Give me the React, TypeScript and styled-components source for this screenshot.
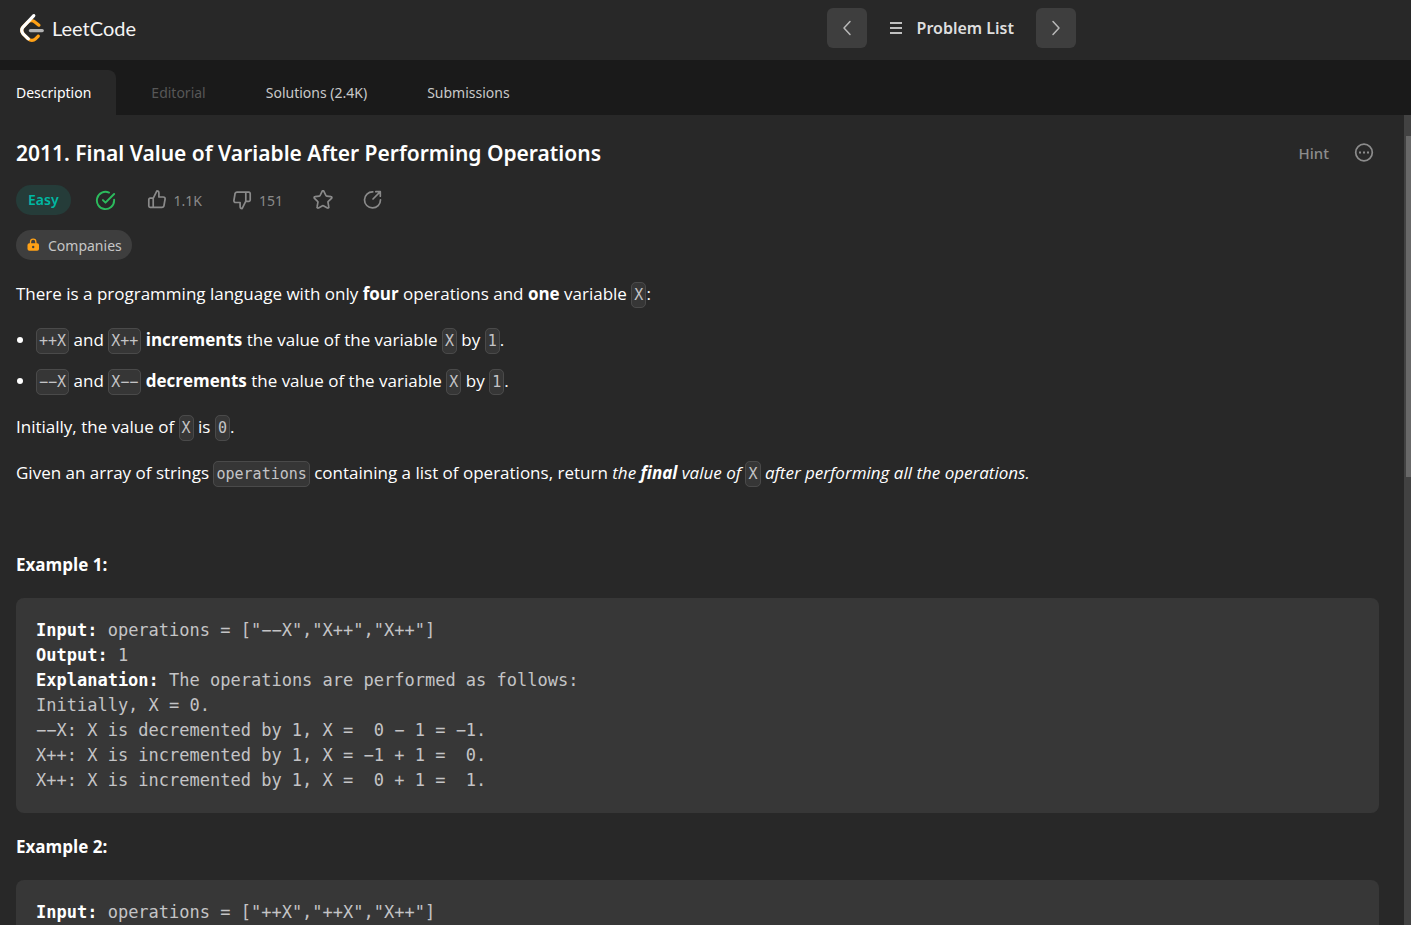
import React from "react";
import styled, { createGlobalStyle, css } from "styled-components";

const sans = `"Noto Sans", "Open Sans", sans-serif`;
const prose = `"Open Sans", "Noto Sans", sans-serif`;
const mono = `"DejaVu Sans Mono", "Liberation Mono", monospace`;

const GlobalStyle = createGlobalStyle`
  * { box-sizing: border-box; }
  body {
    margin: 0;
    background: #282828;
    color: #fff;
    font-family: ${sans};
    font-size: 16px;
    line-height: 25px;
  }
  button { font: inherit; color: inherit; border: 0; background: none; padding: 0; cursor: pointer; }
  svg { display: block; flex: none; }
`;

const Page = styled.div`
  display: flex;
  flex-direction: column;
  height: 100vh;
  overflow: hidden;
`;

const Header = styled.header`
  display: flex;
  flex: none;
  align-items: flex-start;
  justify-content: space-between;
  height: 60px;
  padding: 8px 335px 0 20px;
`;

const Logo = styled.a`
  display: flex;
  align-items: center;
  gap: 8px;
  height: 40px;
  color: #f4f4f4;
  font-family: Lato, sans-serif;
  font-size: 20px;
  text-decoration: none;
`;

const ProblemNav = styled.nav`
  display: flex;
  align-items: center;
  gap: 22px;
`;

const NavButton = styled.button`
  display: grid;
  place-items: center;
  width: 40px;
  height: 40px;
  border-radius: 6px;
  background: #3e3e3e;
  color: #b8b8b8;
`;

const ListLink = styled.a`
  display: flex;
  align-items: center;
  gap: 15px;
  color: #dedede;
  font-size: 16px;
  font-weight: 600;
  text-decoration: none;
`;

const Tabs = styled.div`
  display: flex;
  flex: none;
  align-items: flex-end;
  gap: 10px;
  height: 55px;
  background: #1a1a1a;
`;

const Tab = styled.button<{ $active?: boolean }>`
  height: 45px;
  padding: 0 25px;
  font-size: 14px;
  color: #c9c9c9;
  &:disabled { color: #575757; }
  ${(p) => p.$active && css`
    padding: 0 25px 0 16px;
    border-radius: 0 8px 0 0;
    background: #282828;
    color: #fff;
  `}
`;

const Body = styled.div`
  display: flex;
  flex: 1;
  min-height: 0;
`;

const Content = styled.main`
  flex: 1;
  min-width: 0;
  padding: 23px 25px 0 16px;
  overflow: hidden;
`;

const ScrollTrack = styled.div`
  width: 7px;
  padding: 21px 0 0 2px;
  background: #424242;
`;

const ScrollThumb = styled.div`
  height: 341px;
  background: #686868;
`;

const TitleRow = styled.div`
  display: flex;
  align-items: center;
  justify-content: space-between;
  height: 30px;
`;

const Title = styled.h1`
  margin: 0;
  font-size: 21px;
  font-weight: 600;
`;

const TitleActions = styled.div`
  display: flex;
  align-items: center;
  gap: 25px;
  padding-right: 5px;
  color: #8c8c8c;
  font-size: 15px;
  font-weight: 500;
  line-height: 24px;
`;

const Stats = styled.div`
  display: flex;
  align-items: center;
  height: 30px;
  margin-top: 17px;
  color: #8a8a8a;
  font-size: 14px;
`;

const Pill = styled.span`
  padding: 0 12px;
  border-radius: 15px;
  background: #253c39;
  color: #00b8a3;
  font-weight: 600;
  line-height: 30px;
`;

const Solved = styled.span`
  margin: 0 30px 0 23px;
  color: #2cbb5d;
`;

const Stat = styled.button`
  display: flex;
  align-items: center;
  gap: 7px;
  margin-right: 30px;
`;

const CompaniesButton = styled.button`
  display: flex;
  align-items: center;
  gap: 8px;
  height: 30px;
  margin: 15px 0 21px;
  padding: 0 10px;
  border-radius: 15px;
  background: #3e3e3e;
  color: #c6c6c6;
  font-size: 14px;
`;

const Description = styled.article`
  font-family: ${prose};
  font-size: 17px;
`;

const Text = styled.p`
  margin: 0 0 21px;
`;

const Bullets = styled.ul`
  margin: 0 0 21px;
  padding-left: 20px;
  li + li { margin-top: 16px; }
`;

const Code = styled.code`
  padding: 3px 2px;
  border: 1px solid #4a4a4a;
  border-radius: 5px;
  background: #363636;
  color: #c4c4c6;
  font-family: ${mono};
  font-size: 15px;
  font-style: normal;
  line-height: 20px;
`;

const ExampleTitle = styled.h2`
  margin: 0 0 21px;
  font-size: 17px;
  font-weight: 700;
  line-height: 25px;
`;

const Example = styled.pre`
  margin: 0 0 21px;
  padding: 20px;
  border-radius: 8px;
  background: #373737;
  color: #c4c4c6;
  font-family: ${mono};
  font-size: 17px;
  line-height: 25px;
  strong { color: #fff; }
`;

const line = {
  fill: "none",
  stroke: "currentColor",
  strokeWidth: 2,
  strokeLinecap: "round",
  strokeLinejoin: "round",
} as const;

const LeetCodeMark = () => (
  <svg width="24" height="28" viewBox="0 0 95 111">
    <path fill="#ffa116" d="M68.0063 83.0664C70.5 80.5764 74.5366 80.5829 77.0223 83.0809C79.508 85.579 79.5015 89.6226 77.0078 92.1127L65.9346 103.17C55.7187 113.371 39.06 113.519 28.6718 103.513C28.6117 103.456 23.9861 98.9201 8.72653 83.957C-1.42528 74.0029 -2.43665 58.0749 7.11648 47.8464L24.9282 28.7745C34.4095 18.6219 51.887 17.5122 62.7275 26.2789L78.9048 39.362C81.6444 41.5776 82.0723 45.5985 79.8606 48.3429C77.6488 51.0873 73.635 51.5159 70.8954 49.3003L54.7182 36.2173C49.0488 31.6325 39.1314 32.2622 34.2394 37.5006L16.4274 56.5727C11.7767 61.5522 12.2861 69.574 17.6456 74.8292C28.851 85.8169 37.4869 94.2846 37.4969 94.2942C42.8977 99.496 51.6304 99.4184 56.9331 94.1234L68.0063 83.0664Z" />
    <path fill="#b3b3b3" d="M41.1067 72.0014C37.5858 72.0014 34.7314 69.1421 34.7314 65.615C34.7314 62.0879 37.5858 59.2286 41.1067 59.2286H88.1245C91.6454 59.2286 94.4997 62.0879 94.4997 65.615C94.4997 69.1421 91.6454 72.0014 88.1245 72.0014H41.1067Z" />
    <path fill="#fff" d="M49.9118 2.02335C52.3173 -0.55232 56.3517 -0.686894 58.9228 1.72277C61.494 4.13244 61.6284 8.17385 59.2229 10.7495L16.4276 56.5729C11.7768 61.552 12.2861 69.5738 17.6453 74.8292L37.4088 94.2091C39.9249 96.6764 39.968 100.72 37.505 103.24C35.042 105.761 31.0056 105.804 28.4895 103.337L8.72593 83.9567C-1.42529 74.0021 -2.43665 58.0741 7.1169 47.8463L49.9118 2.02335Z" />
  </svg>
);

const Chevron = ({ d }: { d: string }) => (
  <svg width="20" height="20" viewBox="0 0 20 20">
    <path {...line} strokeWidth={1.5} d={d} />
  </svg>
);

const ListIcon = () => (
  <svg width="13" height="13" viewBox="0 0 13 13">
    <path d="M1 1h12M1 6h12M1 11h12" stroke="#c0c0c0" strokeWidth="2" />
  </svg>
);

const MoreIcon = () => (
  <svg width="20" height="20" viewBox="0 0 20 20">
    <circle cx="10" cy="9.5" r="8.3" fill="none" stroke="currentColor" strokeWidth="1.7" />
    <path d="M5 8.5h2v2h-2zM9 8.5h2v2h-2zM13 8.5h2v2h-2z" fill="currentColor" />
  </svg>
);

const SolvedIcon = () => (
  <svg width="23" height="23" viewBox="0 0 24 24" fill="currentColor">
    <path d="M20 12.005v-.828a1 1 0 112 0v.829a10 10 0 11-5.93-9.14 1 1 0 01-.814 1.826A8 8 0 1020 12.005zM8.593 10.852a1 1 0 011.414 0L12 12.844l8.293-8.3a1 1 0 011.415 1.413l-9 9.009a1 1 0 01-1.415 0l-2.7-2.7a1 1 0 010-1.414z" />
  </svg>
);

const LikeIcon = () => (
  <svg width="20" height="20" viewBox="0 0 20 20">
    <path {...line} strokeWidth={1.7} d="M5.5 8.1H3.1a1.3 1.3 0 0 0-1.3 1.3v6.7a1.3 1.3 0 0 0 1.3 1.3h11.7a2.2 2.2 0 0 0 2.2-1.9l1.1-6.5a1.7 1.7 0 0 0-1.7-2h-4.5V3A2.1 2.1 0 0 0 9.9.9L6.3 8.1zM6.2 8.1v9.3" />
  </svg>
);

const DislikeIcon = () => (
  <svg width="20" height="20" viewBox="0 0 20 20">
    <path {...line} strokeWidth={1.7} d="M14.5 11.4h2.4a1.3 1.3 0 0 0 1.3-1.3V3.4a1.3 1.3 0 0 0-1.3-1.3H5.2A2.2 2.2 0 0 0 3 4L1.9 10.5a1.7 1.7 0 0 0 1.7 2h4.5v4.1a2.1 2.1 0 0 0 2 2.1l3.6-7.3zM13.8 11.4V2.1" />
  </svg>
);

const StarIcon = () => (
  <svg width="20" height="20" viewBox="0 0 20 20">
    <path {...line} strokeWidth={1.7} d="M9.1 1.3a1 1 0 0 1 1.8 0l2 4.2a1 1 0 0 0 .8.6l4.3.6a.9.9 0 0 1 .5 1.6l-3.2 3.1a1 1 0 0 0-.3.9l.8 4.6a.9.9 0 0 1-1.4 1l-4-2.1a1 1 0 0 0-.9 0l-4 2.1a.9.9 0 0 1-1.4-1l.8-4.6a1 1 0 0 0-.3-.9L1.5 8.3a.9.9 0 0 1 .5-1.6l4.3-.6a1 1 0 0 0 .8-.6z" />
  </svg>
);

const ShareIcon = () => (
  <svg width="20" height="20" viewBox="0 0 20 20">
    <path {...line} strokeWidth={1.7} d="M9.8 1.9A8 8 0 1 0 17.5 9.8M10 9l6.8-6.8M12.8 1.7h4.5v4.5" />
  </svg>
);

const LockIcon = () => (
  <svg width="14" height="14" viewBox="0 0 14 14">
    <path d="M4.5 6V3.9a2.7 2.7 0 0 1 5.4 0V6" fill="none" stroke="#ffa116" strokeWidth="1.3" />
    <rect x="1.5" y="5.3" width="11.5" height="7.5" rx="1.8" fill="#ffa116" />
    <circle cx="7.2" cy="9" r="1.2" fill="#3e3e3e" />
  </svg>
);

export default function App() {
  return (
    <Page>
      <GlobalStyle />
      <Header>
        <Logo href="#"><LeetCodeMark />LeetCode</Logo>
        <ProblemNav>
          <NavButton aria-label="Previous problem"><Chevron d="M13 3.5L7 10l6 6.5" /></NavButton>
          <ListLink href="#"><ListIcon />Problem List</ListLink>
          <NavButton aria-label="Next problem"><Chevron d="M7 3.5l6 6.5-6 6.5" /></NavButton>
        </ProblemNav>
      </Header>
      <Tabs role="tablist">
        <Tab role="tab" aria-selected $active>Description</Tab>
        <Tab role="tab" disabled>Editorial</Tab>
        <Tab role="tab">Solutions (2.4K)</Tab>
        <Tab role="tab">Submissions</Tab>
      </Tabs>
      <Body>
        <Content>
          <TitleRow>
            <Title>2011. Final Value of Variable After Performing Operations</Title>
            <TitleActions>
              <button>Hint</button>
              <button aria-label="More"><MoreIcon /></button>
            </TitleActions>
          </TitleRow>
          <Stats>
            <Pill>Easy</Pill>
            <Solved><SolvedIcon /></Solved>
            <Stat><LikeIcon />1.1K</Stat>
            <Stat><DislikeIcon />151</Stat>
            <Stat aria-label="Favorite"><StarIcon /></Stat>
            <Stat aria-label="Share"><ShareIcon /></Stat>
          </Stats>
          <CompaniesButton><LockIcon />Companies</CompaniesButton>

          <Description>
            <Text>
              There is a programming language with only <strong>four</strong> operations and <strong>one</strong> variable <Code>X</Code>:
            </Text>
            <Bullets>
              <li><Code>++X</Code> and <Code>X++</Code> <strong>increments</strong> the value of the variable <Code>X</Code> by <Code>1</Code>.</li>
              <li><Code>−−X</Code> and <Code>X−−</Code> <strong>decrements</strong> the value of the variable <Code>X</Code> by <Code>1</Code>.</li>
            </Bullets>
            <Text>Initially, the value of <Code>X</Code> is <Code>0</Code>.</Text>
            <Text>
              Given an array of strings <Code>operations</Code> containing a list of operations, return <em>the <strong>final</strong> value of <Code>X</Code> after performing all the operations.</em>
            </Text>
            <Text>&nbsp;</Text>
            <ExampleTitle>Example 1:</ExampleTitle>
            <Example>
              <strong>Input:</strong>{` operations = ["−−X","X++","X++"]\n`}
              <strong>Output:</strong>{` 1\n`}
              <strong>Explanation:</strong>{` The operations are performed as follows:
Initially, X = 0.
−−X: X is decremented by 1, X =  0 − 1 = −1.
X++: X is incremented by 1, X = −1 + 1 =  0.
X++: X is incremented by 1, X =  0 + 1 =  1.`}
            </Example>
            <ExampleTitle>Example 2:</ExampleTitle>
            <Example>
              <strong>Input:</strong>{` operations = ["++X","++X","X++"]\n`}
              <strong>Output:</strong>{` 3`}
            </Example>
          </Description>
        </Content>
        <ScrollTrack><ScrollThumb /></ScrollTrack>
      </Body>
    </Page>
  );
}
